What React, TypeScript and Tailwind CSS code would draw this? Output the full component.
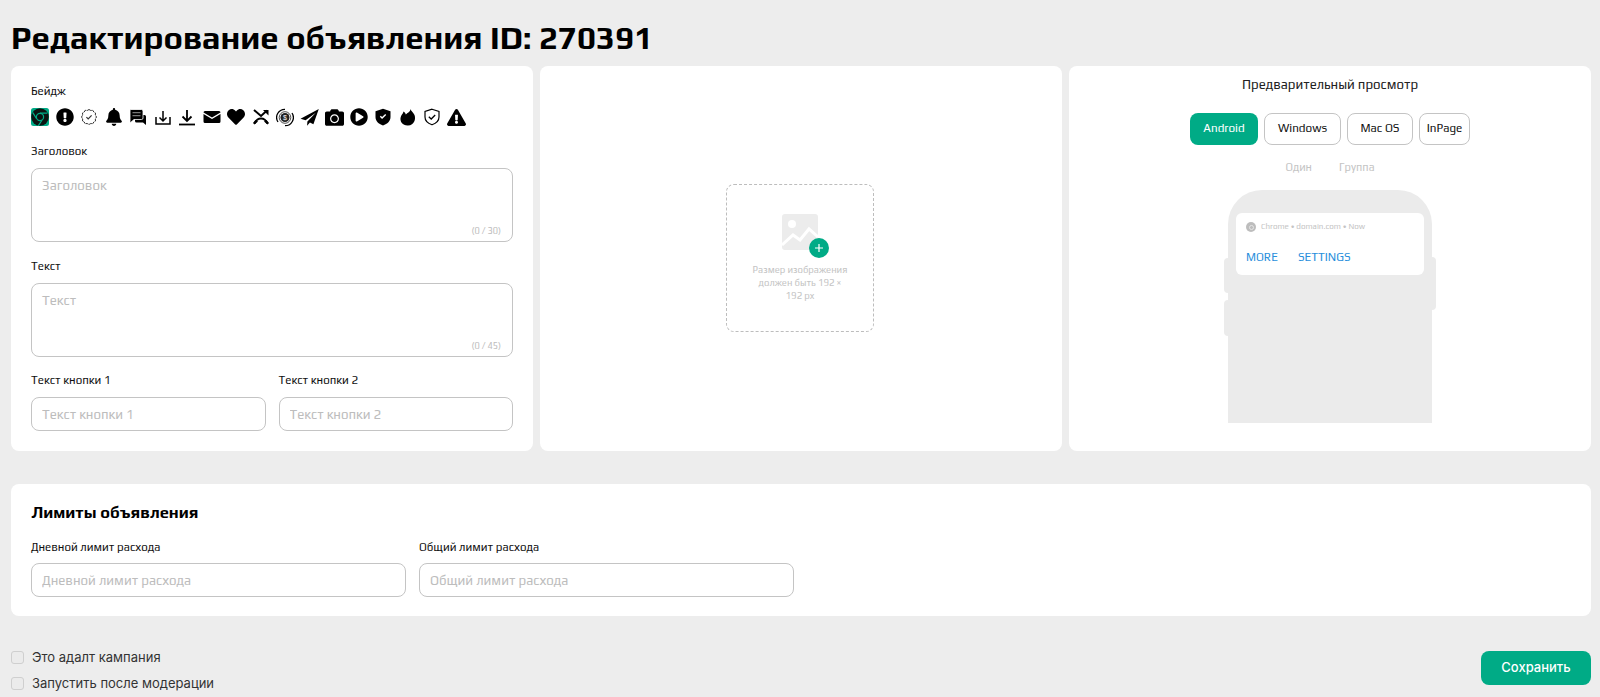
import React from 'react';
import { FaBell, FaCamera, FaExclamationCircle, FaExclamationTriangle, FaHeart, FaPlayCircle } from 'react-icons/fa';

const font = 'font-["Play","Exo_2","Roboto","Liberation_Sans",sans-serif]';

const ChromeTile = () => (
  <svg viewBox="0 0 18 18" className="w-[18px] h-[18px]">
    <rect width="18" height="18" rx="2.5" fill="#00ab86" />
    <circle cx="9" cy="9" r="8.8" fill="#0c1512" />
    <path d="M9 5.200h7.400M5.600 10.800 1.800 4.600M10.800 12.500 7.200 17.800" stroke="#00ab86" strokeWidth="1.200" fill="none" />
    <circle cx="9" cy="9" r="3.600" fill="none" stroke="#00ab86" strokeWidth="1.200" />
  </svg>
);

const Stroke = ({ children }: { children: React.ReactNode }) => (
  <svg viewBox="0 0 18 18" className="w-[18px] h-[18px]" fill="none" stroke="#000" strokeWidth="1.5">
    {children}
  </svg>
);

const Fill = ({ children }: { children: React.ReactNode }) => (
  <svg viewBox="0 0 18 18" className="w-[18px] h-[18px]" fill="#000">
    {children}
  </svg>
);

const icons: React.ReactNode[] = [
  <ChromeTile />,
  <FaExclamationCircle className="w-[18px] h-[18px]" />,
  <svg viewBox="0 0 18 18" className="w-[18px] h-[18px]" fill="none" stroke="#333" strokeWidth="1">
    <path d="M9 1.500l1.800 1 2-.2 1 1.700 1.700 1-.2 2 1.200 2-1.200 2 .2 2-1.700 1-1 1.700-2-.2L9 16.500l-1.800-1-2 .2-1-1.700-1.700-1 .2-2-1.200-2 1.200-2-.2-2 1.700-1 1-1.700 2 .2z" strokeDasharray="3 .6" />
    <path d="M6.400 9.200 8.200 11l3.400-3.600" strokeWidth="1.200" />
  </svg>,
  <FaBell className="w-[18px] h-[18px]" />,
  <Fill>
    <path d="M6 7h9.500A1.500 1.500 0 0 1 17 8.500V17l-3-2.500H7.500A1.500 1.500 0 0 1 6 13z" />
    <path d="M2 1.500h10.500A1.500 1.500 0 0 1 14 3v7a1.500 1.500 0 0 1-1.500 1.500H5L1 15V2.500a1 1 0 0 1 1-1z" stroke="#fff" strokeWidth=".8" />
    <path d="M3.500 4h8v1.200h-8zM3.500 7h8v1.200h-8z" fill="#777" />
  </Fill>,
  <Stroke>
    <path d="M2 9v7h14V9M5.500 9.500 9 13l3.500-3.500M9 3v10" />
  </Stroke>,
  <Stroke>
    <path d="M1 16.500h16" strokeWidth="1.800" />
    <path d="M4.500 8.500 9 13l4.500-4.500M9 2v11" strokeWidth="1.800" />
  </Stroke>,
  <Fill>
    <path d="M2 3h14a1.500 1.500 0 0 1 1.500 1.500L9 9.500 .5 4.500A1.500 1.500 0 0 1 2 3z" />
    <path d="M.5 6 9 11l8.500-5v7.500A1.500 1.500 0 0 1 16 15H2a1.500 1.500 0 0 1-1.500-1.500z" />
  </Fill>,
  <FaHeart className="w-[18px] h-[18px]" />,
  <Stroke>
    <path d="M2 2l7 6 6-5.500" strokeWidth="2" />
    <path d="M11 2h5.500v5.500z" fill="#000" stroke="none" />
    <path d="M2.500 15.500C4 12 6.500 10.500 9 10.500s5 1.500 6.500 5" strokeWidth="2" />
    <path d="M2.500 16.500 1 15l2.500-3 2.500 1.500zM15.500 16.500 17 15l-2.500-3-2.500 1.500z" fill="#000" stroke="none" />
  </Stroke>,
  <svg viewBox="0 0 18 18" className="w-[19px] h-[19px]" fill="none" stroke="#000">
    <circle cx="9" cy="9" r="4.500" fill="#222" stroke="none" />
    <circle cx="9" cy="9" r="5.800" strokeWidth=".7" />
    <path d="M2 13.500A8.200 8.200 0 0 1 9 .8M16 4.500A8.200 8.200 0 0 1 9 17.200" strokeWidth="1.300" />
    <text x="9" y="11.500" fontSize="7" textAnchor="middle" fill="#fff" stroke="none" fontFamily="Liberation Sans">$</text>
  </svg>,
  <svg viewBox="0 0 18 18" className="w-[19px] h-[19px] shrink-0" fill="#000">
    <path d="M17.800 1 .5 10.200l4.800 1.500L15 4.500 7 12.800l-.3 4 2.700-3 3.300 1.500z" />
  </svg>,
  <FaCamera className="w-[19px] h-[19px] shrink-0" />,
  <FaPlayCircle className="w-[18px] h-[18px]" />,
  <Fill>
    <path fillRule="evenodd" d="M9 .8 16.500 3.200V9c0 4-3 7-7.500 8.500C4.500 16 1.500 13 1.500 9V3.200zM5.800 8.800l2.300 2.300 4.100-4-1-1-3.100 3-1.300-1.300z" />
  </Fill>,
  <Fill>
    <path d="M11.500 1c.5 2.500 2.800 3 4 6 1.500 3.800 0 10.300-6.500 10.500C3.500 17.700 1 13.500 1.500 10c.4-3 2.500-4 3-6.500 1 .5 2 1.500 2.300 3C8.500 5 11.500 3.500 11.500 1z" />
  </Fill>,
  <svg viewBox="0 0 18 18" className="w-[18px] h-[18px]" fill="none" stroke="#000" strokeWidth="1.200">
    <path d="M9 1.200 16 3.500V9c0 3.800-3 6.400-7 7.800C5 15.400 2 12.800 2 9V3.500z" />
    <path d="M5.800 8.800 8.200 11l4-4" strokeWidth="1.300" />
  </svg>,
  <FaExclamationTriangle className="w-[19px] h-[19px] shrink-0" />,
];

const Label = ({ children }: { children: React.ReactNode }) => (
  <div className="text-[11.5px] leading-[14px] text-[#111]">{children}</div>
);

const inputCls =
  'w-full h-[34px] rounded-lg border border-[#c4c4c4] bg-white px-[10px] text-[13.25px] text-black outline-none placeholder:text-[#bdbdbd]';

const TextBox = ({ placeholder, limit }: { placeholder: string; limit: number }) => (
  <div className="relative mt-[10px] h-[74px] rounded-lg border border-[#c4c4c4] bg-white">
    <div className="pl-[10px] pt-[9px] text-[13.25px] leading-4 text-[#bdbdbd]">{placeholder}</div>
    <div className="absolute right-[11px] bottom-[4px] text-[9px] leading-3 text-[#bdbdbd]">(0 / {limit})</div>
  </div>
);

const Field = ({ label, gap }: { label: string; gap: string }) => (
  <div className="flex-1 min-w-0">
    <Label>{label}</Label>
    <input placeholder={label} className={`${inputCls} ${gap}`} />
  </div>
);

const Check = ({ label }: { label: string }) => (
  <label className="flex items-center gap-2 text-[13px] leading-[18px] text-[#333] font-['Inter',sans-serif]">
    <span className="w-[13px] h-[13px] rounded-[3px] border border-[#cfcfcf] bg-[#ebebeb]" />
    {label}
  </label>
);

const PreviewTab = ({ label, active, width }: { label: string; active?: boolean; width: string }) => (
  <div
    className={`h-[32px] rounded-lg flex items-center justify-center text-[11.7px] ${width} ${
      active ? 'bg-[#00ab86] text-white' : 'bg-white text-[#111] border border-[#c4c4c4]'
    }`}
  >
    {label}
  </div>
);

export default function App() {
  return (
    <div className={`min-h-[697px] bg-[#ededed] pl-[11px] pr-[9px] ${font}`}>
      <h1 className="pt-[17px] h-[66px] text-[32.8px] leading-10 font-bold text-black">Редактирование объявления ID: 270391</h1>

      <div className="grid grid-cols-3 gap-[7px]">
        <section className="h-[385px] rounded-lg bg-white px-[20px] pt-[18px]">
          <Label>Бейдж</Label>
          <div className="mt-[10px] flex h-[18px] justify-between w-[435px]">
            {icons.map((icon, i) => (
              <div key={i} className="flex h-[18px] w-[18px] items-center justify-center">
                {icon}
              </div>
            ))}
          </div>
          <div className="mt-[18px]">
            <Label>Заголовок</Label>
          </div>
          <TextBox placeholder="Заголовок" limit={30} />
          <div className="mt-[17px]">
            <Label>Текст</Label>
          </div>
          <TextBox placeholder="Текст" limit={45} />
          <div className="mt-[16px] flex gap-[13px]">
            <Field label="Текст кнопки 1" gap="mt-[10px]" />
            <Field label="Текст кнопки 2" gap="mt-[10px]" />
          </div>
        </section>

        <section className="h-[385px] rounded-lg bg-white flex items-center justify-center">
          <div className="mr-[2px] mb-[2px] w-[148px] h-[148px] rounded-lg border border-dashed border-[#bdbdbd] flex flex-col items-center pt-[29px]">
            <div className="relative w-[36px] h-[36px]">
              <svg viewBox="0 0 36 36" className="w-[36px] h-[36px]">
                <rect width="36" height="36" rx="3" fill="#ececec" />
                <circle cx="10" cy="10" r="4" fill="#fff" />
                <path d="M0 31 11 21l7 5 9-11 9 8" fill="none" stroke="#fff" strokeWidth="3" />
              </svg>
              <div className="absolute left-[27px] top-[24px] w-[20px] h-[20px] rounded-full bg-[#00ab86] text-white flex items-center justify-center">
                <svg viewBox="0 0 10 10" className="w-[10px] h-[10px]" stroke="#fff" strokeWidth="1.200">
                  <path d="M5 1v8M1 5h8" />
                </svg>
              </div>
            </div>
            <div className="mt-[13px] w-[98px] text-center text-[9.5px] leading-[13px] text-[#c4c4c4]">
              Размер изображения должен быть 192 × 192 px
            </div>
          </div>
        </section>

        <section className="h-[385px] rounded-lg bg-white flex flex-col items-center pt-[11px] overflow-hidden">
          <div className="text-[13.2px] leading-[16px] text-[#222]">Предварительный просмотр</div>
          <div className="mt-[20px] flex gap-[6px]">
            <PreviewTab label="Android" active width="w-[68px]" />
            <PreviewTab label="Windows" width="w-[77px]" />
            <PreviewTab label="Mac OS" width="w-[66px]" />
            <PreviewTab label="InPage" width="w-[51px]" />
          </div>
          <div className="mt-[15px] flex gap-[27px] text-[11px] leading-[14px] text-[#c4c4c4]">
            <span>Один</span>
            <span>Группа</span>
          </div>
          <div className="relative mt-[16px] w-[204px] h-[233px] rounded-t-[34px] bg-[#ebebeb] px-[8px] pt-[23px]">
            <div className="absolute -left-[4px] top-[68px] w-[4px] h-[35px] rounded-l bg-[#ebebeb]" />
            <div className="absolute -left-[4px] top-[110px] w-[4px] h-[36px] rounded-l bg-[#ebebeb]" />
            <div className="absolute -right-[4px] top-[67px] w-[4px] h-[53px] rounded-r bg-[#ebebeb]" />
            <div className="h-[62px] rounded-md bg-white px-[10px] pt-[9px]">
              <div className="flex items-center gap-[5px] text-[8px] leading-[10px] text-[#c4c4c4]">
                <span className="w-[10px] h-[10px] rounded-full bg-[#bdbdbd] flex items-center justify-center">
                  <span className="w-[5px] h-[5px] rounded-full border border-[#e5e5e5]" />
                </span>
                Chrome • domain.com • Now
              </div>
              <div className="mt-[18px] flex gap-[20px] text-[11.6px] leading-[14px] text-[#2a8fdc]">
                <span>MORE</span>
                <span>SETTINGS</span>
              </div>
            </div>
          </div>
        </section>
      </div>

      <section className="mt-[33px] h-[132px] rounded-lg bg-white px-[20px] pt-[20px]">
        <h2 className="text-[16.4px] leading-[18px] font-bold text-black">Лимиты объявления</h2>
        <div className="mt-[18px] flex gap-[13px] w-[763px]">
          <Field label="Дневной лимит расхода" gap="mt-[9px]" />
          <Field label="Общий лимит расхода" gap="mt-[9px]" />
        </div>
      </section>

      <div className="mt-[32px] flex items-end justify-between">
        <div className="flex flex-col gap-[8px]">
          <Check label="Это адалт кампания" />
          <Check label="Запустить после модерации" />
        </div>
        <button className="mb-[7px] w-[110px] h-[34px] rounded-lg bg-[#00ab86] text-white text-[13px] font-medium font-['Inter',sans-serif]">
          Сохранить
        </button>
      </div>
    </div>
  );
}
